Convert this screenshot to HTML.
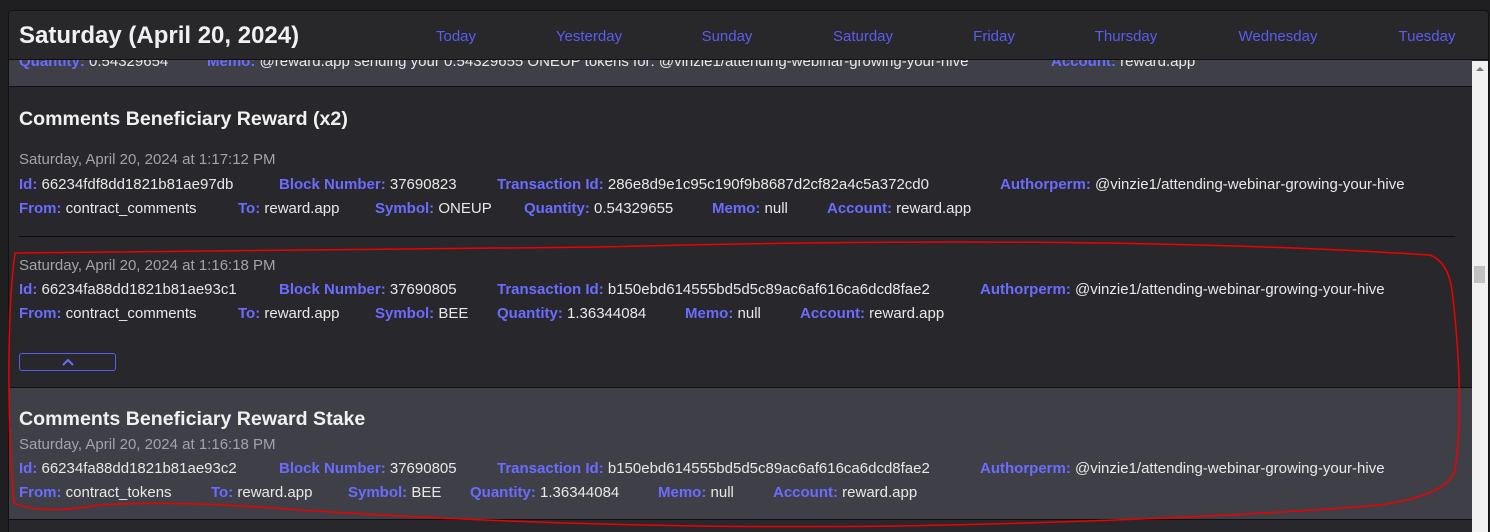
<!DOCTYPE html>
<html><head><meta charset="utf-8"><style>
*{margin:0;padding:0;box-sizing:border-box}
html,body{width:1490px;height:532px;overflow:hidden}
body{background:#1f1f22;font-family:"Liberation Sans",sans-serif;position:relative;color:#e8e8e8}
.a{position:absolute;white-space:nowrap;font-size:15px;line-height:18px}
.l{color:#6b6bff;font-weight:bold}
.d{color:#a2a2a8}
.n{position:absolute;top:28px;color:#5b5bf0;font-size:15px;transform:translateX(-50%)}
</style></head><body>
<div style="position:absolute;left:8px;top:10px;width:1481px;height:530px;background:#28282c;border:1px solid #111;border-radius:4px"></div>
<div style="position:absolute;left:9px;top:60px;width:1463px;height:27px;background:#3f4047;border-bottom:1px solid #111"></div>
<div style="position:absolute;left:9px;top:387px;width:1463px;height:133px;background:#3f4047;border-top:1px solid #111;border-bottom:1px solid #111"></div>
<div class="a" style="left:19px;top:53px"><span class="l">Quantity:</span> 0.54329654</div>
<div class="a" style="left:207px;top:53px"><span class="l">Memo:</span> @reward.app sending your 0.54329655 ONEUP tokens for: @vinzie1/attending-webinar-growing-your-hive</div>
<div class="a" style="left:1051px;top:53px"><span class="l">Account:</span> reward.app</div>
<div style="position:absolute;left:9px;top:11px;width:1479px;height:49px;background:#28282b;border-bottom:1px solid #111;border-radius:4px 4px 0 0"></div>
<div style="position:absolute;left:19px;top:22px;font-size:24px;font-weight:bold;color:#f0f0f0">Saturday (April 20, 2024)</div>
<div class="n" style="left:456px">Today</div><div class="n" style="left:589px">Yesterday</div><div class="n" style="left:727px">Sunday</div><div class="n" style="left:863px">Saturday</div><div class="n" style="left:994px">Friday</div><div class="n" style="left:1126px">Thursday</div><div class="n" style="left:1278px">Wednesday</div><div class="n" style="left:1427px">Tuesday</div>
<div style="position:absolute;left:1472px;top:61px;width:16px;height:471px;background:#f0f0f0"></div>
<div style="position:absolute;left:1476px;top:67px;width:0;height:0;border-left:4px solid transparent;border-right:4px solid transparent;border-bottom:4px solid #777"></div>
<div style="position:absolute;left:1474px;top:266px;width:11px;height:17px;background:#c1c1c1"></div>

<div style="position:absolute;left:19px;top:108px;font-size:19.6px;font-weight:bold;color:#f0f0f0">Comments Beneficiary Reward (x2)</div>
<div class="a d" style="left:19px;top:151px">Saturday, April 20, 2024 at 1:17:12 PM</div>
<div class="a" style="left:19px;top:176px"><span class="l">Id:</span> 66234fdf8dd1821b81ae97db</div>
<div class="a" style="left:279px;top:176px"><span class="l">Block Number:</span> 37690823</div>
<div class="a" style="left:497px;top:176px"><span class="l">Transaction Id:</span> 286e8d9e1c95c190f9b8687d2cf82a4c5a372cd0</div>
<div class="a" style="left:1000px;top:176px"><span class="l">Authorperm:</span> @vinzie1/attending-webinar-growing-your-hive</div>
<div class="a" style="left:19px;top:200px"><span class="l">From:</span> contract_comments</div>
<div class="a" style="left:238px;top:200px"><span class="l">To:</span> reward.app</div>
<div class="a" style="left:375px;top:200px"><span class="l">Symbol:</span> ONEUP</div>
<div class="a" style="left:524px;top:200px"><span class="l">Quantity:</span> 0.54329655</div>
<div class="a" style="left:712px;top:200px"><span class="l">Memo:</span> null</div>
<div class="a" style="left:827px;top:200px"><span class="l">Account:</span> reward.app</div>
<div style="position:absolute;left:19px;top:236px;width:1436px;height:1px;background:#0e0e10"></div>

<div class="a d" style="left:19px;top:257px">Saturday, April 20, 2024 at 1:16:18 PM</div>
<div class="a" style="left:19px;top:281px"><span class="l">Id:</span> 66234fa88dd1821b81ae93c1</div>
<div class="a" style="left:279px;top:281px"><span class="l">Block Number:</span> 37690805</div>
<div class="a" style="left:497px;top:281px"><span class="l">Transaction Id:</span> b150ebd614555bd5d5c89ac6af616ca6dcd8fae2</div>
<div class="a" style="left:980px;top:281px"><span class="l">Authorperm:</span> @vinzie1/attending-webinar-growing-your-hive</div>
<div class="a" style="left:19px;top:305px"><span class="l">From:</span> contract_comments</div>
<div class="a" style="left:238px;top:305px"><span class="l">To:</span> reward.app</div>
<div class="a" style="left:375px;top:305px"><span class="l">Symbol:</span> BEE</div>
<div class="a" style="left:497px;top:305px"><span class="l">Quantity:</span> 1.36344084</div>
<div class="a" style="left:685px;top:305px"><span class="l">Memo:</span> null</div>
<div class="a" style="left:800px;top:305px"><span class="l">Account:</span> reward.app</div>
<div style="position:absolute;left:19px;top:353px;width:97px;height:18px;border:1px solid #5b5bf0;border-radius:3px"></div>
<svg style="position:absolute;left:60px;top:356px" width="16" height="12"><path d="M3 9 L8 4 L13 9" stroke="#6b6bff" stroke-width="2" fill="none"/></svg>

<div style="position:absolute;left:19px;top:408px;font-size:19.6px;font-weight:bold;color:#f0f0f0">Comments Beneficiary Reward Stake</div>
<div class="a d" style="left:19px;top:436px">Saturday, April 20, 2024 at 1:16:18 PM</div>
<div class="a" style="left:19px;top:460px"><span class="l">Id:</span> 66234fa88dd1821b81ae93c2</div>
<div class="a" style="left:279px;top:460px"><span class="l">Block Number:</span> 37690805</div>
<div class="a" style="left:497px;top:460px"><span class="l">Transaction Id:</span> b150ebd614555bd5d5c89ac6af616ca6dcd8fae2</div>
<div class="a" style="left:980px;top:460px"><span class="l">Authorperm:</span> @vinzie1/attending-webinar-growing-your-hive</div>
<div class="a" style="left:19px;top:484px"><span class="l">From:</span> contract_tokens</div>
<div class="a" style="left:211px;top:484px"><span class="l">To:</span> reward.app</div>
<div class="a" style="left:348px;top:484px"><span class="l">Symbol:</span> BEE</div>
<div class="a" style="left:470px;top:484px"><span class="l">Quantity:</span> 1.36344084</div>
<div class="a" style="left:658px;top:484px"><span class="l">Memo:</span> null</div>
<div class="a" style="left:773px;top:484px"><span class="l">Account:</span> reward.app</div>

<svg style="position:absolute;left:0;top:0" width="1490" height="532"><path d="M15 253 L600 247 Q1100 234 1430 255 Q1448 262 1452 290 Q1465 400 1455 470 Q1448 495 1380 505 Q1200 520 900 526 Q600 530 300 510 Q180 500 100 505 Q40 515 14 503 Q8 440 9 350 Q10 290 15 253 Z" stroke="#e00" stroke-width="1.5" fill="none"/></svg>
</body></html>
